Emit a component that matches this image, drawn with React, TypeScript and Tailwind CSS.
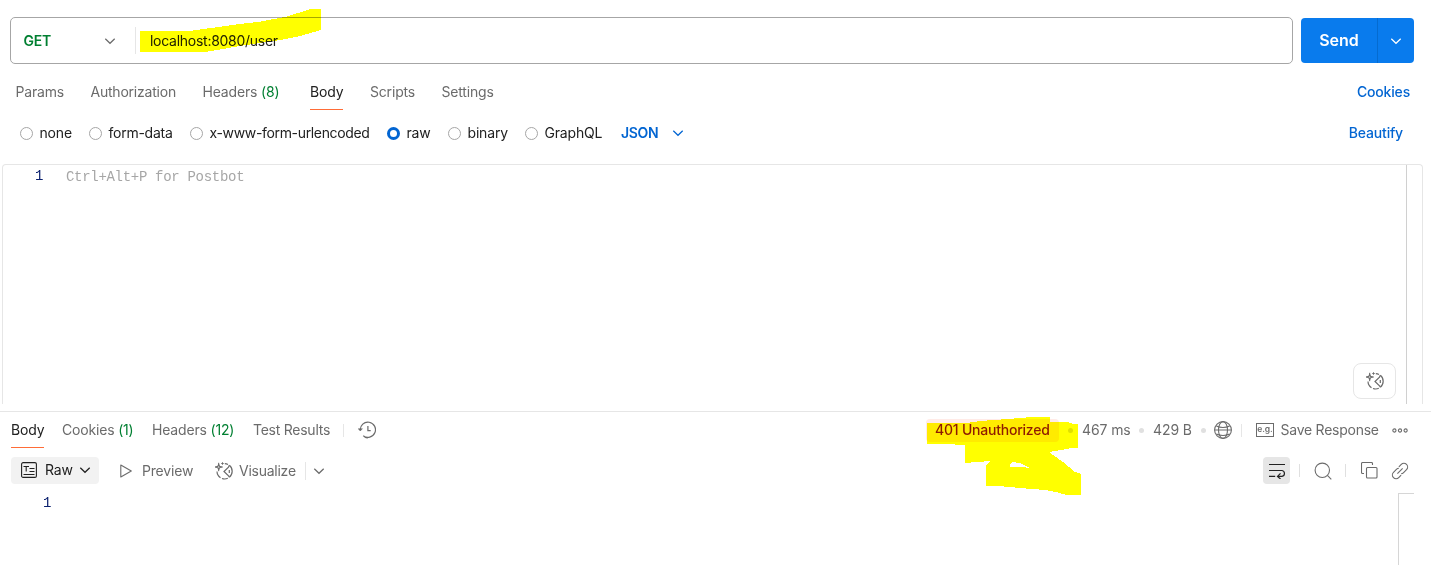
import React from "react";

type P = { className?: string };

const Chevron = ({ className = "" }: P) => (
  <svg className={`h-3 w-3 shrink-0 ${className}`} viewBox="0 0 12 12" fill="none" stroke="currentColor" strokeWidth="1.2">
    <path d="M1.3 3.7 6 8.3l4.7-4.6" />
  </svg>
);

const Bot = ({ className = "" }: P) => (
  <svg className={`h-[18px] w-[18px] shrink-0 ${className}`} viewBox="0 0 18 18" fill="none" stroke="currentColor" strokeWidth="1.2">
    <path d="M9.800 1.600A7.700 7.700 0 0 1 13 2.500M14.300 3.300a7.700 7.700 0 0 1 0 12M12.800 16.300a7.700 7.700 0 0 1-5.800.2M5.500 15.700a7.700 7.700 0 0 1-3.500-6.200" />
    <path d="M14.300 3.300 13.500 5.200 9 9.500l4.500 4.300.8 1.500M14.300 8v3" />
    <path d="M3.700 2.400 4.500 4.200 6.300 5 4.500 5.800 3.700 7.600 2.900 5.800 1.100 5 2.900 4.200Z" />
    <path d="M7.500.3v2.400M6.300 1.500h2.400M3.700.8v2M3.700 7.200v2M-.3 5h2M5.700 5h2" strokeWidth="1" />
  </svg>
);

const History = () => (
  <svg className="h-[18px] w-[18px] shrink-0" viewBox="0 0 18 18" fill="none" stroke="currentColor" strokeWidth="1.2">
    <path d="M2.300 9.300a7.600 7.600 0 1 1 2.900 5.400M6.500 15.900a7.600 7.600 0 0 0 3.400.9" />
    <path d="M9.900 5v4.600h2.800" />
    <path d="M.2 7.700h4.200L2.300 10Z" fill="currentColor" strokeWidth=".5" />
  </svg>
);

const Globe = () => (
  <svg className="h-[18px] w-[18px] shrink-0" viewBox="0 0 18 18" fill="none" stroke="currentColor" strokeWidth="1.1">
    <circle cx="9" cy="9" r="8.400" />
    <ellipse cx="9" cy="9" rx="4.500" ry="8.400" />
    <path d="M2.300 5c4 1.800 9.400 1.800 13.400 0M.6 9h16.800M2.300 13c4 1.800 9.400 1.800 13.400 0" />
  </svg>
);

const RawIcon = () => (
  <svg className="h-4 w-4 shrink-0" viewBox="0 0 16 16" fill="none" stroke="currentColor" strokeWidth="1.100">
    <rect x=".6" y=".6" width="14.800" height="14.800" rx="1.500" />
    <path d="M2.500 4.500h5.500M5.200 4.500v5M8.500 6.500h5M8.500 9.500h5M2.500 12.500h11" />
  </svg>
);

const Play = () => (
  <svg className="h-[14px] w-3 shrink-0" viewBox="0 0 12 14" fill="none" stroke="currentColor" strokeWidth="1.100" strokeLinejoin="round">
    <path d="M.8 1.100 11.300 7 .8 12.900Z" />
  </svg>
);

const Example = () => (
  <svg className="h-[14px] w-[18px] shrink-0" viewBox="0 0 18 14" fill="none" stroke="currentColor">
    <rect x=".5" y=".5" width="17" height="13" />
    <text x="9" y="9" textAnchor="middle" fill="currentColor" stroke="none" fontFamily="Inter, sans-serif" fontSize="8.500" fontWeight="600" letterSpacing="-.1">e.g.</text>
  </svg>
);

const Wrap = () => (
  <svg className="h-4 w-[18px]" viewBox="0 0 18 16" fill="none" stroke="#212121" strokeWidth="1.200">
    <path d="M1 1.500h16M1 7.500h13a3 3 0 0 1 0 5.900H9.700M1 13.400h6.200M12.500 10.300 9.500 13.400l3 2.600" />
  </svg>
);

const Search = () => (
  <svg className="h-[18px] w-[18px] shrink-0" viewBox="0 0 18 18" fill="none" stroke="currentColor" strokeWidth="1.100">
    <circle cx="8.300" cy="8.300" r="7.200" />
    <path d="m13.400 13.400 3.900 3.900" />
  </svg>
);

const Copy = () => (
  <svg className="h-[17px] w-[17px] shrink-0" viewBox="0 0 17 17" fill="none" stroke="currentColor" strokeWidth="1.100">
    <rect x="5.500" y="5.500" width="10.500" height="10.500" rx="1" />
    <path d="M3 11.500H1.500a1 1 0 0 1-1-1v-9a1 1 0 0 1 1-1h9a1 1 0 0 1 1 1V3" />
  </svg>
);

const LinkIcon = () => (
  <svg className="h-[18px] w-[18px] shrink-0" viewBox="0 0 24 24" fill="none" stroke="currentColor" strokeWidth="1.500">
    <path d="M8.500 15.500l7-7" />
    <path d="M10.500 6.500l3.200-3.200a4.900 4.900 0 0 1 7 7l-3.900 3.900a4.900 4.900 0 0 1-3.300 1.400" />
    <path d="M13.500 17.500l-3.200 3.200a4.900 4.900 0 0 1-7-7l3.900-3.900a4.900 4.900 0 0 1 3.300-1.400" />
  </svg>
);

const More = () => (
  <svg className="h-[5px] w-4 shrink-0" viewBox="0 0 16 5" fill="none" stroke="currentColor" strokeWidth="1.100">
    <circle cx="2.400" cy="2.500" r="1.600" />
    <circle cx="8" cy="2.500" r="1.600" />
    <circle cx="13.600" cy="2.500" r="1.600" />
  </svg>
);

const Radio = ({ label, on = false, className }: { label: string; on?: boolean; className: string }) => (
  <label className={`flex shrink-0 items-center whitespace-nowrap ${className}`}>
    <span className={`mr-[6.500px] h-[13px] w-[13px] shrink-0 rounded-full ${on ? "border-[3.500px] border-[#0265d2]" : "border border-[#a6a6a6]"}`} />
    {label}
  </label>
);

const Count = ({ n }: { n: number }) => <span className="text-[#007f31]">({n})</span>;

export default function App() {
  return (
    <div className="relative flex h-[565px] w-[1431px] flex-col overflow-hidden bg-white font-[Inter,sans-serif] text-[14px] leading-5 tracking-[-0.18px] text-[#6b6b6b]">
      <div className="mt-[17px] flex h-[47px] shrink-0 pl-[10px]">
        <div className="flex w-[1283px] items-center rounded-[5px] border border-[#a6a6a6]">
          <span className="w-[93px] pl-[12.5px] font-semibold text-[#007f31]">GET</span>
          <Chevron />
          <span className="ml-[19px] h-[27px] w-px bg-[#e6e6e6]" />
          <span className="ml-[14px] tracking-[-0.27px] text-[#212121]">localhost:8080/user</span>
        </div>
        <div className="ml-2 mt-px flex h-[45px] w-[113px] overflow-hidden rounded-[4px] bg-[#097bed] text-white">
          <button className="w-[77px] border-r border-[#056bd0] pb-px text-[16px] font-semibold tracking-normal">Send</button>
          <button className="flex flex-1 items-center justify-center"><Chevron /></button>
        </div>
      </div>

      <div className="flex h-[46px] shrink-0 items-start pl-[15.5px] pt-[18px]">
        <span className="w-[75px]">Params</span>
        <span className="w-[112px] tracking-[-0.22px]">Authorization</span>
        <span className="w-[107.5px]">Headers <Count n={8} /></span>
        <span className="flex h-7 w-[33px] flex-col justify-between text-[#212121]">Body<span className="h-px bg-[#ff6c37]" /></span>
        <span className="ml-[27px] w-[71.5px]">Scripts</span>
        <span>Settings</span>
        <span className="ml-auto mr-[21px] font-medium text-[#0265d2]">Cookies</span>
      </div>

      <div className="flex h-[54px] shrink-0 items-center pb-[8px] pl-5 text-[#212121]">
        <Radio label="none" className="w-[69px]" />
        <Radio label="form-data" className="w-[101px] tracking-[-0.25px]" />
        <Radio label="x-www-form-urlencoded" className="w-[197px] tracking-[-0.34px]" />
        <Radio label="raw" on className="w-[61px]" />
        <Radio label="binary" className="w-[77px]" />
        <Radio label="GraphQL" className="w-[96px]" />
        <span className="w-[51px] font-semibold tracking-[-0.3px] text-[#0265d2]">JSON</span>
        <Chevron className="text-[#0265d2]" />
        <span className="ml-auto mr-7 font-medium text-[#0265d2]">Beautify</span>
      </div>

      <div className="ml-[2px] flex h-[240px] w-[1421px] shrink-0 rounded-t-[4px] border border-b-0 border-[#e6e6e6] font-['Liberation_Mono',monospace]">
        <span className="w-[63px] pl-8 pt-px text-[#0b216f]">1</span>
        <span className="pt-[2px] tracking-[-0.3px] text-[#a6a6a6]">Ctrl+Alt+P for Postbot</span>
        <div className="ml-auto mr-[10px] mt-[198px] flex h-9 w-[43px] items-center justify-center rounded-[8px] border border-[#e6e6e6] pl-px"><Bot /></div>
        <div className="w-4 border-l border-[#d0d0d0]" />
      </div>

      <div className="mt-[7px] flex h-[37px] shrink-0 items-start border-t border-[#e6e6e6] pl-[11px]">
        <span className="flex h-[36px] w-[33px] flex-col justify-between pt-[8px] text-[#212121]">Body<span className="h-px bg-[#ff6c37]" /></span>
        <div className="flex h-[36px] flex-1 items-center">
          <span className="ml-[18px] w-[90px]">Cookies <Count n={1} /></span>
          <span className="w-[101px]">Headers <Count n={12} /></span>
          <span className="w-[90px] tracking-[-0.25px]">Test Results</span>
          <span className="mr-[14px] h-[13px] w-px bg-[#e6e6e6]" />
          <History />
          <span className="ml-auto flex h-[23px] w-[133px] items-center rounded-[4px] bg-[#ffebe7] pl-[9px] font-medium tracking-[-0.22px] text-[#8e1a10]">401 Unauthorized</span>
          <span className="ml-[9px] mr-[9px] h-[5px] w-[5px] rounded-full bg-[#e0e0e0]" />
          <span className="w-[57px] tracking-[-0.1px]">467 ms</span>
          <span className="mr-[9px] h-[5px] w-[5px] rounded-full bg-[#e0e0e0]" />
          <span className="w-[48px] tracking-[-0.1px]">429 B</span>
          <span className="mr-[8px] h-[5px] w-[5px] rounded-full bg-[#e0e0e0]" />
          <Globe />
          <span className="ml-[9px] mr-[14px] h-[13px] w-px bg-[#e6e6e6]" />
          <Example />
          <span className="ml-[6.5px] w-[111.5px] tracking-[-0.25px]">Save Response</span>
          <More />
          <span className="w-[23px]" />
        </div>
      </div>

      <div className="mt-[9px] flex h-[27px] shrink-0 items-center pl-[11px]">
        <div className="flex h-[27px] w-[88px] items-center rounded-[4px] bg-[#f2f2f2] pb-px pl-[10px] text-[#212121]">
          <RawIcon />
          <span className="ml-2 w-[34px]">Raw</span>
          <Chevron />
        </div>
        <span className="ml-[21px] flex w-[95px] items-center gap-[10px]"><Play />Preview</span>
        <Bot />
        <span className="ml-[6px] w-[66px] tracking-[-0.25px]">Visualize</span>
        <span className="mr-[7px] h-[18px] w-px bg-[#e6e6e6]" />
        <Chevron />
        <div className="ml-auto flex h-[27px] w-[27px] items-center justify-center rounded-[4px] bg-[#e6e6e6]"><Wrap /></div>
        <span className="ml-[9px] mr-[14px] h-[13px] w-px bg-[#e0e0e0]" />
        <Search />
        <span className="ml-[13px] mr-[15px] h-[13px] w-px bg-[#e0e0e0]" />
        <Copy />
        <span className="w-[13px]" />
        <LinkIcon />
        <span className="w-[22px]" />
      </div>

      <div className="flex flex-1 pt-[8px] font-['Liberation_Mono',monospace]">
        <span className="pl-[43px] pt-px text-[#0b216f]">1</span>
        <div className="ml-auto mr-[17px] mt-px w-4 border-l border-t border-[#d6d6d6]" />
      </div>

      <svg className="pointer-events-none absolute inset-0 mix-blend-multiply" width="1431" height="565" shapeRendering="crispEdges" fill="#ffff00" fillRule="evenodd">
        <path d="M140 31H167V30.500H193L240 24 258 22 285 17 311 9H321V30L300 36 280 40 240 46 217 50 205 52H140Z" />
        <path d="M927 423H966L980 421 1008 419 1032 417H1050V422H1068L1073 424H1078V448H1072L1061 450 1049 452 1063 462 1075 472 1081 474V495H1067L1056 492 1045 490 1020 488 998 486H986V465L990 461 965 463V445H955V444H927ZM1010 465 1012 462 1020 463 1030 468 1018 466.500H1010Z" />
      </svg>
    </div>
  );
}
